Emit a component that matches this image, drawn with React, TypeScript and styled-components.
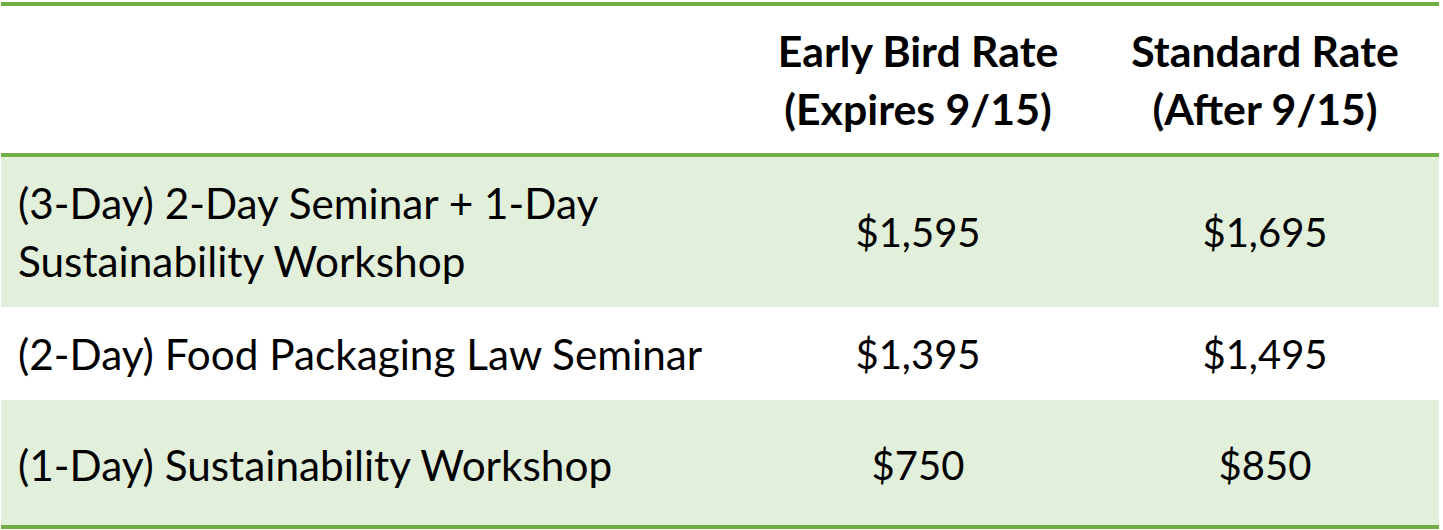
import React from "react";
import styled, { createGlobalStyle } from "styled-components";

const Global = createGlobalStyle`
  html, body { margin: 0; padding: 0; background: #ffffff; }
  body { font-family: Lato, "Open Sans", sans-serif; color: #000; }
`;

const Table = styled.div`
  margin: 2px 4px 0 1px;
  border-top: 4px solid #70ad47;
  border-bottom: 4px solid #70ad47;
  font-family: Lato, "Open Sans", sans-serif;
  font-size: 40px;
  line-height: 58px;
`;

const Row = styled.div<{ $h: number; $shaded?: boolean; $divider?: boolean; $offset?: number }>`
  display: grid;
  grid-template-columns: 744px 346px 1fr;
  align-items: center;
  height: ${(p) => p.$h}px;
  box-sizing: border-box;
  padding-top: ${(p) => p.$offset ?? 0}px;
  background: ${(p) => (p.$shaded ? "#e2efda" : "#ffffff")};
  border-bottom: ${(p) => (p.$divider ? "4px solid #70ad47" : "none")};
`;

const Label = styled.div`
  padding-left: 17px;
  text-align: left;
  font-size: 42.3px;
  white-space: nowrap;
`;

const Price = styled.div`
  text-align: center;
  font-size: 40px;
`;

const HeadCell = styled.div`
  text-align: center;
  font-weight: 700;
  font-size: 42.8px;
  white-space: nowrap;
`;

const rows = [
  { label: ["(3-Day) 2-Day Seminar + 1-Day", "Sustainability Workshop"], early: "$1,595", std: "$1,695", h: 150, shaded: true, offset: 0 },
  { label: ["(2-Day) Food Packaging Law Seminar"], early: "$1,395", std: "$1,495", h: 93, shaded: false, offset: 0 },
  { label: ["(1-Day) Sustainability Workshop"], early: "$750", std: "$850", h: 125, shaded: true, offset: 4 },
];

export default function App() {
  return (
    <>
      <Global />
      <Table>
        <Row $h={151} $divider>
          <div />
          <HeadCell>
            Early Bird Rate
            <br />
            (Expires 9/15)
          </HeadCell>
          <HeadCell>
            Standard Rate
            <br />
            (After 9/15)
          </HeadCell>
        </Row>
        {rows.map((r, i) => (
          <Row key={i} $h={r.h} $shaded={r.shaded} $offset={r.offset}>
            <Label>
              {r.label.map((l, j) => (
                <React.Fragment key={j}>
                  {j > 0 && <br />}
                  {l}
                </React.Fragment>
              ))}
            </Label>
            <Price>{r.early}</Price>
            <Price>{r.std}</Price>
          </Row>
        ))}
      </Table>
    </>
  );
}
